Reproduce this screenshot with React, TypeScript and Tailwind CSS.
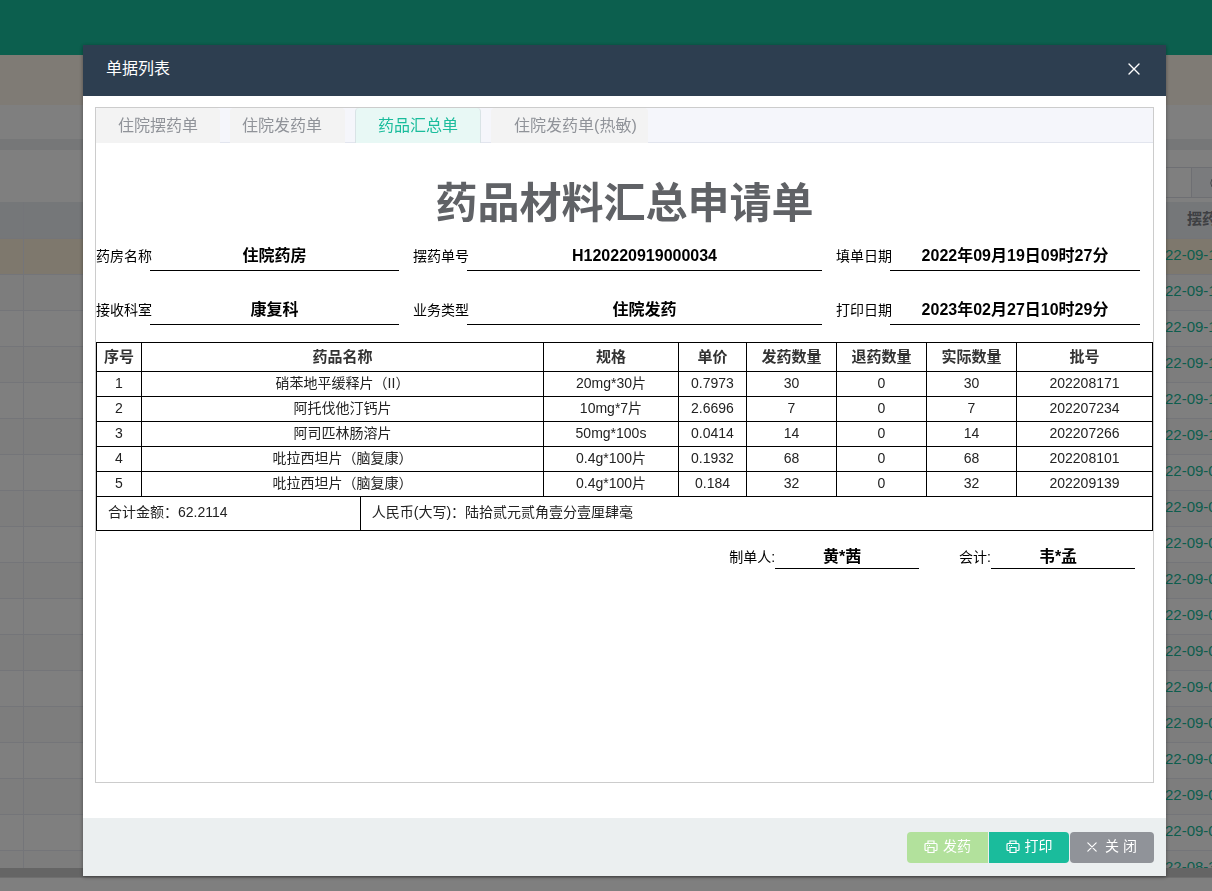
import { useState } from 'react';
import type { ReactNode } from 'react';
import clsx from 'clsx';

interface Drug {
  name: string;
  spec: string;
  price: string;
  issued: number;
  returned: number;
  actual: number;
  batch: string;
}

const drugs: Drug[] = [
  { name: '硝苯地平缓释片（II）', spec: '20mg*30片', price: '0.7973', issued: 30, returned: 0, actual: 30, batch: '202208171' },
  { name: '阿托伐他汀钙片', spec: '10mg*7片', price: '2.6696', issued: 7, returned: 0, actual: 7, batch: '202207234' },
  { name: '阿司匹林肠溶片', spec: '50mg*100s', price: '0.0414', issued: 14, returned: 0, actual: 14, batch: '202207266' },
  { name: '吡拉西坦片（脑复康）', spec: '0.4g*100片', price: '0.1932', issued: 68, returned: 0, actual: 68, batch: '202208101' },
  { name: '吡拉西坦片（脑复康）', spec: '0.4g*100片', price: '0.184', issued: 32, returned: 0, actual: 32, batch: '202209139' },
];

const columns = [
  { title: '序号', width: 'w-[46px]' },
  { title: '药品名称', width: '' },
  { title: '规格', width: 'w-[135px]' },
  { title: '单价', width: 'w-[68px]' },
  { title: '发药数量', width: 'w-[90px]' },
  { title: '退药数量', width: 'w-[90px]' },
  { title: '实际数量', width: 'w-[90px]' },
  { title: '批号', width: 'w-[136px]' },
];

const tabs = [
  { label: '住院摆药单', className: 'pl-[22px] pr-[22px]' },
  { label: '住院发药单', className: 'pl-[12px] pr-[23px]' },
  { label: '药品汇总单', className: 'px-[22px]' },
  { label: '住院发药单(热敏)', className: 'pl-[23px] pr-[11px]' },
];

const fields = [
  { label: '药房名称', value: '住院药房' },
  { label: '摆药单号', value: 'H120220919000034' },
  { label: '填单日期', value: '2022年09月19日09时27分' },
  { label: '接收科室', value: '康复科' },
  { label: '业务类型', value: '住院发药' },
  { label: '打印日期', value: '2023年02月27日10时29分' },
];

const orderDates = [
  '22-09-1', '22-09-1', '22-09-1', '22-09-1', '22-09-1', '22-09-1',
  '22-09-0', '22-09-0', '22-09-0', '22-09-0', '22-09-0', '22-09-0',
  '22-09-0', '22-09-0', '22-09-0', '22-09-0', '22-09-0', '22-08-3',
];

const PrinterIcon = () => (
  <svg viewBox="0 0 14 14" className="h-[14px] w-[14px]" fill="none" stroke="currentColor" strokeWidth="1.2" aria-hidden="true">
    <path d="M4 3.500V1h6v2.500" />
    <path d="M3.500 10.500H2a1 1 0 0 1-1-1v-5a1 1 0 0 1 1-1h10a1 1 0 0 1 1 1v5a1 1 0 0 1-1 1h-1.500" />
    <path d="M4 7.500h6v5H4z" />
    <path d="M3 5.500h1M5 5.500h1" />
  </svg>
);

const CloseIcon = ({ className }: { className: string }) => (
  <svg viewBox="0 0 12 12" className={className} fill="none" stroke="currentColor" strokeWidth="1.4" strokeLinecap="round" aria-hidden="true">
    <path d="M1 1l10 10M11 1L1 11" />
  </svg>
);

// Order list that stays behind the dialog
const OrderPage = () => (
  <div className="flex h-screen flex-col overflow-hidden bg-white">
    <header className="h-[55px] shrink-0 bg-[#18be9c]" />
    <div className="h-[50px] shrink-0 bg-[#fff6ea]" />
    <div className="h-[34px] shrink-0" />
    <div className="h-[11px] shrink-0 bg-[#eceef1]" />
    <div className="flex h-[52px] shrink-0 items-end justify-end pb-1">
      <input aria-label="搜索" className="h-[31px] w-[200px] border border-[#dcdfe6] bg-white" />
      <button aria-label="查询" className="flex h-[31px] w-[20px] items-center justify-end overflow-hidden border-y border-[#dcdfe6] bg-[#f5f7fa] text-[#909399]">
        <svg viewBox="0 0 2 10" className="h-[10px] w-[2px]" fill="none" stroke="currentColor">
          <path d="M2 1Q-.5 5 2 9" />
        </svg>
      </button>
    </div>
    <div className="min-h-0 flex-1 overflow-hidden">
      <table className="w-full table-fixed border-separate border-spacing-0">
        <thead>
          <tr className="h-[37px] bg-[#ebeef2] text-left text-[15px] text-[#7d8087]">
            <th className="w-[24px] border-r border-b border-[#e8ebf2]" />
            <th className="border-b border-[#e8ebf2]" />
            <th className="w-[47px] overflow-hidden border-b border-[#e8ebf2] pt-0 pr-0 pb-[2px] pl-[22px] leading-5 whitespace-nowrap">摆药</th>
          </tr>
        </thead>
        <tbody>
          {orderDates.map((date, i) => (
            <tr key={i} className={clsx('h-[36px]', i === 0 ? 'bg-[#fdf1da]' : i % 2 ? 'bg-[#fafafa]' : 'bg-white')}>
              <td className="border-r border-b border-[#e8ebf2]" />
              <td className="border-b border-[#e8ebf2]" />
              <td className="overflow-hidden border-b border-[#e8ebf2] px-0 pt-0 pb-[4px] text-[15px] leading-5 whitespace-nowrap text-[#1abc9c]">{date}</td>
            </tr>
          ))}
        </tbody>
      </table>
    </div>
    <div className="h-[10px] shrink-0 border-b border-[#dedede] bg-[#cacaca]" />
    <div className="h-[13px] shrink-0" />
  </div>
);

const Field = ({ label, value }: { label: string; value: string }) => (
  <div className="flex h-[30px]">
    <span className="w-[54px] shrink-0 text-[14px] leading-[30px] whitespace-nowrap">{label}</span>
    <span className="flex-1 border-b border-black text-center text-[16px] leading-[30px] font-bold whitespace-nowrap">{value}</span>
  </div>
);

const Signature = ({ label, value }: { label: string; value: string }) => (
  <div className="flex h-[28px]">
    <span className="text-[14px] leading-[32px] whitespace-nowrap">{label}</span>
    <span className="w-[144px] border-b border-black pr-[10px] text-center text-[16px] leading-[32px] font-bold">{value}</span>
  </div>
);

const Cell = ({ children }: { children: ReactNode }) => (
  <td className="h-[25px] border-r border-b border-black px-0 pt-0 pb-[2px] text-center leading-[22px]">{children}</td>
);

const SummarySheet = () => (
  <div className="text-black">
    <h1 className="pt-[28px] text-center text-[42px] leading-[66px] font-bold text-[#606266]">药品材料汇总申请单</h1>

    <div className="grid grid-cols-[303fr_409fr_304fr] gap-x-[14px] gap-y-[24px] pt-[4px] pr-[13px]">
      {fields.map(field => (
        <Field key={field.label} label={field.label} value={field.value} />
      ))}
    </div>

    <table className="mt-[17px] w-full table-fixed border-separate border-spacing-0 border-t border-black text-[14px] text-[#222]">
      <thead>
        <tr>
          {columns.map(col => (
            <th
              key={col.title}
              className={clsx('h-[29px] border-r border-b border-black p-0 text-[15px] leading-[28px] text-[#333] first:border-l', col.width)}
            >
              {col.title}
            </th>
          ))}
        </tr>
      </thead>
      <tbody className="[&_td:first-child]:border-l">
        {drugs.map((drug, i) => (
          <tr key={drug.batch}>
            <Cell>{i + 1}</Cell>
            <Cell>{drug.name}</Cell>
            <Cell>{drug.spec}</Cell>
            <Cell>{drug.price}</Cell>
            <Cell>{drug.issued}</Cell>
            <Cell>{drug.returned}</Cell>
            <Cell>{drug.actual}</Cell>
            <Cell>{drug.batch}</Cell>
          </tr>
        ))}
      </tbody>
    </table>
    <div className="grid h-[34px] grid-cols-4 border-x border-b border-black text-[14px] leading-[30px] text-[#222]">
      <span className="border-r border-black pl-[11px]">合计金额：62.2114</span>
      <span className="col-span-3 pl-[11px]">人民币(大写)：陆拾贰元贰角壹分壹厘肆毫</span>
    </div>

    <div className="flex justify-end gap-[40px] pt-[10px] pr-[18px]">
      <Signature label="制单人:" value="黄*茜" />
      <Signature label="会计:" value="韦*孟" />
    </div>
  </div>
);

export default function App() {
  const [activeTab, setActiveTab] = useState('药品汇总单');

  return (
    <div className="font-['Liberation_Sans','Noto_Sans_CJK_SC',sans-serif]">
      <OrderPage />

      <div className="fixed inset-0 flex bg-black/50 pt-[45px] pr-[46px] pb-[15px] pl-[83px]">
        <section role="dialog" aria-label="单据列表" className="flex min-w-0 flex-1 flex-col bg-white shadow-[0_1px_4px_rgba(0,0,0,0.4)]">
          <header className="flex h-[51px] shrink-0 items-center justify-between bg-[#2d3e50] pr-[25px] pb-[3px] pl-[23px] text-white">
            <h2 className="text-[16px] leading-6">单据列表</h2>
            <button aria-label="关闭窗口" className="flex h-[14px] w-[14px] items-center justify-center">
              <CloseIcon className="h-[12px] w-[12px]" />
            </button>
          </header>

          <div className="flex min-h-0 flex-1 flex-col px-3 pt-[11px] pb-[35px]">
            <div className="min-h-0 flex-1 border border-[#ccc]">
              <div role="tablist" className="flex h-[35px] gap-[10px] bg-[#f5f6fb] shadow-[inset_0_-1px_0_#e2e5ee]">
                {tabs.map(tab => (
                  <button
                    key={tab.label}
                    role="tab"
                    aria-selected={tab.label === activeTab}
                    onClick={() => setActiveTab(tab.label)}
                    className={clsx(
                      'rounded-t text-[16px] leading-[35px] whitespace-nowrap',
                      tab.className,
                      tab.label === activeTab
                        ? 'border-x border-[#d9e3e6] bg-[#e8f8f5] text-[#1abc9c]'
                        : 'bg-[#f3f3f3] text-[#909399]'
                    )}
                  >
                    {tab.label}
                  </button>
                ))}
              </div>
              <SummarySheet />
            </div>
          </div>

          <footer className="flex h-[58px] shrink-0 items-start justify-end gap-px bg-[#ebeff0] pt-[14px] pr-3 text-[14px] text-white">
            <button className="flex h-[31px] w-[81px] items-center justify-center gap-[5px] rounded-l bg-[#b2e19c] pb-[2px]">
              <PrinterIcon />
              发药
            </button>
            <button className="flex h-[31px] w-[80px] items-center justify-center gap-[5px] rounded-r bg-[#1abc9c] pb-[2px]">
              <PrinterIcon />
              打印
            </button>
            <button className="flex h-[31px] w-[84px] items-center justify-center gap-2 rounded bg-[#909399] pb-[2px]">
              <CloseIcon className="h-[10px] w-[10px]" />
              关 闭
            </button>
          </footer>
        </section>
      </div>
    </div>
  );
}
